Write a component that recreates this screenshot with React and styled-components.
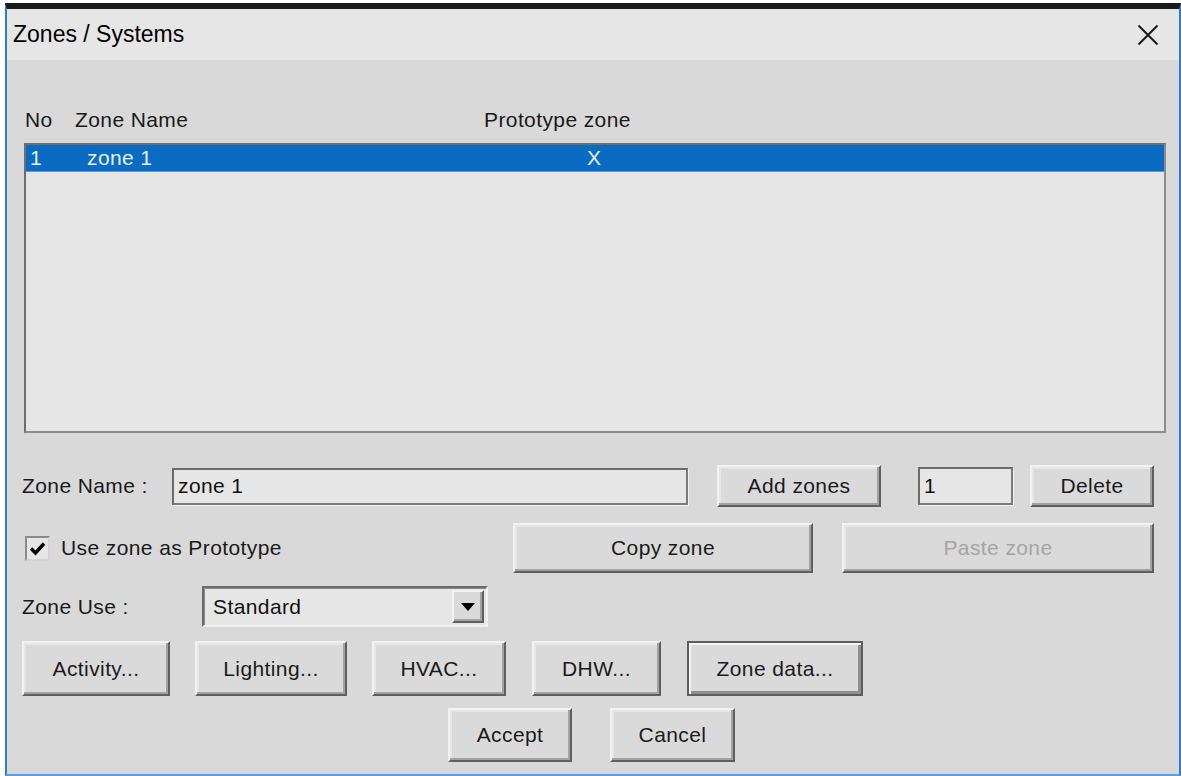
import React, { useState } from "react";
import styled, { createGlobalStyle } from "styled-components";

const GlobalStyle = createGlobalStyle`
  html, body {
    margin: 0;
    padding: 0;
    background: #ffffff;
  }
  body {
    padding-top: 3px;
    font-family: "Liberation Sans", Arial, sans-serif;
  }
`;

const UI_FONT = `21px "Liberation Sans", Arial, sans-serif`;

const Window = styled.div`
  box-sizing: border-box;
  margin-left: 5px;
  width: 1176px;
  height: 773px;
  border-top: 6px solid #1b1b1b;
  border-left: 2px solid #2b7ed6;
  border-right: 2px solid #2b7ed6;
  border-bottom: 2px solid #5a9fe0;
  display: flex;
  flex-direction: column;
  background: #d9d9d9;
  letter-spacing: 0.4px;
`;

const TitleBar = styled.div`
  height: 51px;
  flex: none;
  background: #e6e6e6;
  display: flex;
  align-items: center;
  justify-content: space-between;
  padding: 0 16px 0 6px;
`;

const Title = styled.span`
  font: 23px "Liberation Sans", Arial, sans-serif;
  color: #000;
  letter-spacing: 0;
`;

const CloseButton = styled.button`
  width: 30px;
  height: 30px;
  border: none;
  background: transparent;
  padding: 0;
  display: grid;
  place-items: center;
  cursor: pointer;
`;

const Body = styled.div`
  flex: 1;
  padding: 0 13px 0 15px;
  display: flex;
  flex-direction: column;
`;

const HeaderRow = styled.div`
  margin-top: 46px;
  height: 28px;
  display: flex;
  align-items: center;
  font: ${UI_FONT};
  color: #1a1a1a;
`;

const Col = styled.span`
  flex: none;
  width: ${(p) => (p.$w ? `${p.$w}px` : "auto")};
  padding-left: ${(p) => p.$pl || 0}px;
  box-sizing: border-box;
  white-space: nowrap;
`;

const ListBox = styled.div`
  margin-top: 9px;
  margin-left: 2px;
  width: 1142px;
  height: 290px;
  box-sizing: border-box;
  background: #e6e6e6;
  border: 2px solid;
  border-color: #6e6e6e #8c8c8c #8c8c8c #6e6e6e;
`;

const ListRow = styled.div`
  height: 26px;
  display: flex;
  align-items: center;
  font: ${UI_FONT};
  background: ${(p) => (p.$selected ? "#0a6bc2" : "transparent")};
  color: ${(p) => (p.$selected ? "#e9f1fb" : "#111")};
  border-bottom: 1px solid ${(p) => (p.$selected ? "#5c9ad8" : "transparent")};
`;

const Row = styled.div`
  display: flex;
  align-items: center;
  height: ${(p) => p.$h}px;
  margin-top: ${(p) => p.$mt}px;
`;

const Label = styled.span`
  flex: none;
  width: ${(p) => p.$w}px;
  font: ${UI_FONT};
  color: #1a1a1a;
  white-space: nowrap;
`;

const TextField = styled.input`
  flex: none;
  box-sizing: border-box;
  width: ${(p) => p.$w}px;
  height: ${(p) => p.$h}px;
  margin-left: ${(p) => p.$ml || 0}px;
  background: #e6e6e6;
  border: 2px solid;
  border-color: #6b6b6b #7a7a7a #7a7a7a #6b6b6b;
  box-shadow: 1px 1px 0 #f2f2f2;
  padding: 0 4px;
  font: ${UI_FONT};
  letter-spacing: 0.4px;
  color: #111;
  outline: none;
`;

const Button = styled.button`
  flex: none;
  box-sizing: border-box;
  width: ${(p) => p.$w}px;
  height: ${(p) => p.$h}px;
  margin-left: ${(p) => p.$ml || 0}px;
  padding: 0;
  background: #dadada;
  border: 2px solid;
  border-color: ${(p) =>
    p.$default ? "#5e5e5e" : "#f2f2f2 #5f5f5f #5f5f5f #f2f2f2"};
  box-shadow: ${(p) =>
    p.$default
      ? "inset 2px 2px 0 #f2f2f2, inset -3px -3px 0 #8e8e8e"
      : "inset -2px -2px 0 #a2a2a2, inset 2px 2px 0 #e6e6e6"};
  font: ${UI_FONT};
  letter-spacing: 0.4px;
  color: ${(p) => (p.disabled ? "#a4a4a4" : "#1a1a1a")};
  cursor: ${(p) => (p.disabled ? "default" : "pointer")};

  &:active:not(:disabled) {
    border-color: #5f5f5f #f2f2f2 #f2f2f2 #5f5f5f;
  }
`;

const CheckGroup = styled.label`
  flex: none;
  width: 491px;
  display: flex;
  align-items: center;
  gap: 11px;
  padding-left: 3px;
  box-sizing: border-box;
  font: ${UI_FONT};
  color: #1a1a1a;
  cursor: pointer;
`;

const CheckBox = styled.span`
  width: 25px;
  height: 25px;
  box-sizing: border-box;
  background: #e6e6e6;
  border: 2px solid;
  border-color: #8a8a8a #d4d4d4 #d4d4d4 #8a8a8a;
  display: grid;
  place-items: center;
`;

const Select = styled.div`
  flex: none;
  width: 286px;
  height: 41px;
  box-sizing: border-box;
  background: #e6e6e6;
  border: 2px solid;
  border-color: #6b6b6b #f0f0f0 #f0f0f0 #6b6b6b;
  box-shadow: inset 1px 1px 0 #8a8a8a;
  display: flex;
  align-items: center;
  padding: 0 2px 0 9px;
  font: ${UI_FONT};
  color: #111;
`;

const SelectValue = styled.span`
  flex: 1;
`;

const SelectArrow = styled.span`
  width: 32px;
  height: 33px;
  box-sizing: border-box;
  background: #dadada;
  border: 2px solid;
  border-color: #f2f2f2 #5f5f5f #5f5f5f #f2f2f2;
  box-shadow: inset -2px -2px 0 #a2a2a2;
  display: grid;
  place-items: center;
`;

const ButtonRow = styled.div`
  display: flex;
  align-items: center;
  margin-top: ${(p) => p.$mt}px;
  padding-left: ${(p) => p.$pl || 0}px;
  height: ${(p) => p.$h}px;
`;

const zones = [{ no: 1, name: "zone 1", prototype: true }];

const App = () => {
  const [name, setName] = useState("zone 1");
  const [count, setCount] = useState("1");
  const [usePrototype, setUsePrototype] = useState(true);

  return (
    <>
      <GlobalStyle />
      <Window>
        <TitleBar>
          <Title>Zones / Systems</Title>
          <CloseButton aria-label="Close">
            <svg width="22" height="22" viewBox="0 0 22 22">
              <path
                d="M1.5 1.5 L20.5 20.5 M20.5 1.5 L1.5 20.5"
                stroke="#1a1a1a"
                strokeWidth="2"
                fill="none"
              />
            </svg>
          </CloseButton>
        </TitleBar>

        <Body>
          <HeaderRow>
            <Col $w={53} $pl={3}>No</Col>
            <Col $w={409}>Zone Name</Col>
            <Col>Prototype zone</Col>
          </HeaderRow>

          <ListBox>
            {zones.map((z) => (
              <ListRow key={z.no} $selected>
                <Col $w={61} $pl={4}>{z.no}</Col>
                <Col $w={500}>{z.name}</Col>
                <Col>{z.prototype ? "X" : ""}</Col>
              </ListRow>
            ))}
          </ListBox>

          {/* name field + add / delete */}
          <Row $h={42} $mt={32}>
            <Label $w={150}>Zone Name :</Label>
            <TextField
              $w={516}
              $h={37}
              value={name}
              onChange={(e) => setName(e.target.value)}
            />
            <Button $w={164} $h={42} $ml={29}>Add zones</Button>
            <TextField
              $w={95}
              $h={38}
              $ml={37}
              value={count}
              onChange={(e) => setCount(e.target.value)}
            />
            <Button $w={124} $h={42} $ml={17}>Delete</Button>
          </Row>

          <Row $h={50} $mt={16}>
            <CheckGroup onClick={() => setUsePrototype(!usePrototype)}>
              <CheckBox>
                {usePrototype && (
                  <svg width="17" height="15" viewBox="0 0 17 15">
                    <path
                      d="M2 7.5 L6.5 12 L15 2.5"
                      stroke="#000"
                      strokeWidth="3.4"
                      fill="none"
                    />
                  </svg>
                )}
              </CheckBox>
              Use zone as Prototype
            </CheckGroup>
            <Button $w={300} $h={50}>Copy zone</Button>
            <Button $w={312} $h={50} $ml={29} disabled>
              Paste zone
            </Button>
          </Row>

          <Row $h={41} $mt={13}>
            <Label $w={180}>Zone Use :</Label>
            <Select>
              <SelectValue>Standard</SelectValue>
              <SelectArrow>
                <svg width="14" height="8" viewBox="0 0 14 8">
                  <path d="M0 0 H14 L7 8 Z" fill="#000" />
                </svg>
              </SelectArrow>
            </Select>
          </Row>

          <ButtonRow $mt={14} $h={55}>
            <Button $w={148} $h={55}>Activity...</Button>
            <Button $w={152} $h={55} $ml={25}>Lighting...</Button>
            <Button $w={134} $h={55} $ml={25}>HVAC...</Button>
            <Button $w={129} $h={55} $ml={26}>DHW...</Button>
            <Button $w={176} $h={55} $ml={26} $default>Zone data...</Button>
          </ButtonRow>

          <ButtonRow $mt={12} $h={54} $pl={426}>
            <Button $w={124} $h={54}>Accept</Button>
            <Button $w={125} $h={54} $ml={38}>Cancel</Button>
          </ButtonRow>
        </Body>
      </Window>
    </>
  );
};

export default App;
